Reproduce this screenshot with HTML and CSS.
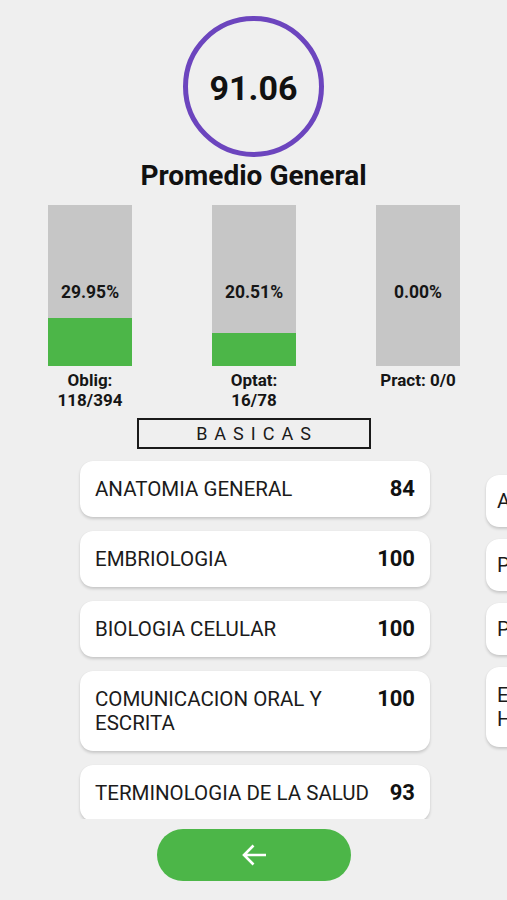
FILE: index.html
```html
<!DOCTYPE html>
<html lang="es">
<head>
<meta charset="utf-8">
<link rel="stylesheet" href="styles.css">
</head>
<body>
<div class="page">
  <div class="score"><span>91.06</span></div>
  <h1 class="title">Promedio General</h1>

  <div class="bars">
    <div class="bar-col">
      <div class="bar">
        <div class="fill" style="height:29.95%"></div>
        <span class="pct">29.95%</span>
      </div>
      <div class="label">Oblig:<br>118/394</div>
    </div>
    <div class="bar-col">
      <div class="bar">
        <div class="fill" style="height:20.51%"></div>
        <span class="pct">20.51%</span>
      </div>
      <div class="label">Optat:<br>16/78</div>
    </div>
    <div class="bar-col">
      <div class="bar">
        <div class="fill" style="height:0%"></div>
        <span class="pct">0.00%</span>
      </div>
      <div class="label">Pract: 0/0</div>
    </div>
  </div>

  <div class="section"><span>BASICAS</span></div>

  <div class="lists">
    <div class="col main">
      <div class="card"><span class="name">ANATOMIA GENERAL</span><span class="grade">84</span></div>
      <div class="card"><span class="name">EMBRIOLOGIA</span><span class="grade">100</span></div>
      <div class="card"><span class="name">BIOLOGIA CELULAR</span><span class="grade">100</span></div>
      <div class="card"><span class="name">COMUNICACION ORAL Y ESCRITA</span><span class="grade">100</span></div>
      <div class="card"><span class="name">TERMINOLOGIA DE LA SALUD</span><span class="grade">93</span></div>
    </div>
    <div class="col side">
      <div class="card small"><span class="name">A</span></div>
      <div class="card small"><span class="name">P</span></div>
      <div class="card small"><span class="name">P</span></div>
      <div class="card small tall"><span class="name">E<br>H</span></div>
    </div>
  </div>

  <div class="actions">
    <button class="back" type="button" aria-label="Volver">
      <svg width="28" height="24" viewBox="0 0 28 24"><path d="M26 12H4M13.5 2.5L4 12l9.5 9.5" fill="none" stroke="#fff" stroke-width="2.6"/></svg>
    </button>
  </div>
</div>
</body>
</html>
```
FILE: styles.css
```css
* { box-sizing: border-box; }
html, body {
  margin: 0;
  padding: 0;
  background: #efefef;
  font-family: Roboto, "Noto Sans", "Liberation Sans", sans-serif;
  color: #111;
  overflow: hidden;
}
.page {
  width: 507px;
  height: 900px;
  display: flex;
  flex-direction: column;
  align-items: center;
}
.score {
  margin-top: 16px;
  width: 141px;
  height: 141px;
  border: 5px solid #6c45be;
  border-radius: 50%;
  display: flex;
  align-items: center;
  justify-content: center;
  font-size: 34px;
  font-weight: 700;
  color: #111;
}
.score span { margin-top: 2px; }
.title {
  margin: 3px 0 0;
  font-size: 28px;
  font-weight: 700;
  line-height: 32px;
  color: #111;
}
.bars {
  margin-top: 13px;
  width: 100%;
  padding: 0 47px 0 48px;
  display: flex;
  justify-content: space-between;
  align-items: flex-start;
}
.bar-col {
  width: 84px;
  display: flex;
  flex-direction: column;
  align-items: center;
}
.bar {
  position: relative;
  width: 84px;
  height: 161px;
  background: #c6c6c6;
  display: flex;
  flex-direction: column;
  justify-content: flex-end;
}
.fill {
  width: 100%;
  background: #4cb648;
}
.pct {
  position: absolute;
  left: 0;
  right: 0;
  top: 76px;
  text-align: center;
  font-size: 17.5px;
  font-weight: 700;
  line-height: 22px;
  color: #161616;
}
.label {
  margin-top: 4px;
  text-align: center;
  font-size: 17px;
  font-weight: 700;
  line-height: 20px;
  white-space: nowrap;
  color: #161616;
}
.section {
  margin-top: 8px;
  width: 234px;
  height: 31px;
  border: 2px solid #1a1a1a;
  display: flex;
  align-items: center;
  justify-content: center;
  font-size: 18px;
  letter-spacing: 7px;
  color: #1a1a1a;
}
.section span { margin-left: 7px; }
.lists {
  width: 100%;
  height: 364px;
  margin-top: 6px;
  padding: 6px 0 0 80px;
  display: flex;
  gap: 56px;
  overflow: hidden;
}
.col {
  display: flex;
  flex-direction: column;
  gap: 14px;
  flex-shrink: 0;
}
.col.main { width: 350px; }
.col.side { width: 300px; gap: 12px; margin-top: 14px; }
.card {
  background: #fff;
  border-radius: 13px;
  box-shadow: 0 2px 3px rgba(0,0,0,0.16), 0 0 1px rgba(0,0,0,0.08);
  padding: 16px 15px;
  display: flex;
  justify-content: space-between;
  align-items: flex-start;
  gap: 8px;
  font-size: 20.5px;
  line-height: 24px;
  color: #1b1b1b;
  flex-shrink: 0;
}
.card .grade {
  font-size: 22px;
  font-weight: 700;
  line-height: 24px;
  color: #111;
  white-space: nowrap;
}
.card.small {
  padding: 14px 11px;
}
.card.tall {
  padding: 16px 11px;
}
.actions {
  margin-top: 10px;
  display: flex;
  justify-content: center;
  width: 100%;
}
.back {
  width: 194px;
  height: 52px;
  border: none;
  border-radius: 26px;
  background: #4cb648;
  display: flex;
  align-items: center;
  justify-content: center;
  padding: 0;
  margin-left: 1px;
}
.back svg { display: block; }
```
